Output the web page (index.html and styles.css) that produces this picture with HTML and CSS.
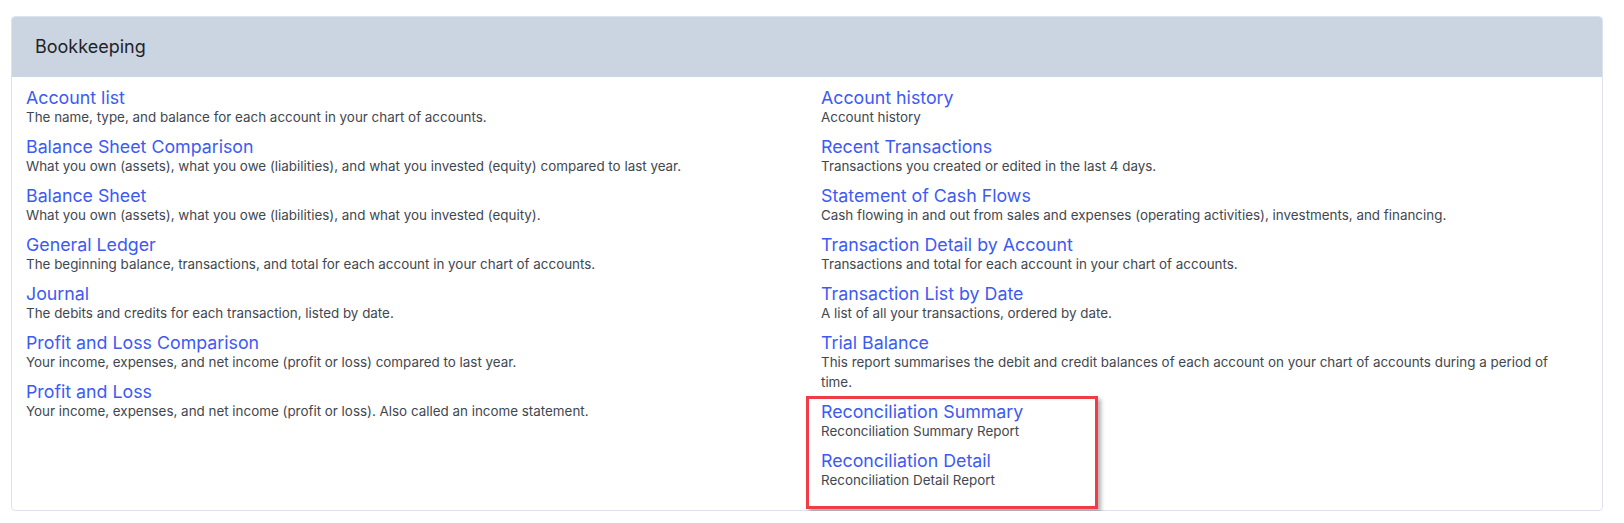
FILE: index.html
```html
<!DOCTYPE html>
<html lang="en">
<head>
    <meta charset="UTF-8">
    <meta name="viewport" content="width=device-width, initial-scale=1.0">
    <title>Reports - Bookkeeping</title>
    <link rel="stylesheet" href="styles.css">
</head>
<body>

<div class="report-card">
    <div class="report-card-header">Bookkeeping</div>

    <div class="report-card-body">
        <!-- Left column -->
        <div class="report-col">
            <div class="report-item">
                <a href="#" class="report-title">Account list</a>
                <p class="report-desc">The name, type, and balance for each account in your chart of accounts.</p>
            </div>
            <div class="report-item">
                <a href="#" class="report-title">Balance Sheet Comparison</a>
                <p class="report-desc">What you own (assets), what you owe (liabilities), and what you invested (equity) compared to last year.</p>
            </div>
            <div class="report-item">
                <a href="#" class="report-title">Balance Sheet</a>
                <p class="report-desc">What you own (assets), what you owe (liabilities), and what you invested (equity).</p>
            </div>
            <div class="report-item">
                <a href="#" class="report-title">General Ledger</a>
                <p class="report-desc">The beginning balance, transactions, and total for each account in your chart of accounts.</p>
            </div>
            <div class="report-item">
                <a href="#" class="report-title">Journal</a>
                <p class="report-desc">The debits and credits for each transaction, listed by date.</p>
            </div>
            <div class="report-item">
                <a href="#" class="report-title">Profit and Loss Comparison</a>
                <p class="report-desc">Your income, expenses, and net income (profit or loss) compared to last year.</p>
            </div>
            <div class="report-item">
                <a href="#" class="report-title">Profit and Loss</a>
                <p class="report-desc">Your income, expenses, and net income (profit or loss). Also called an income statement.</p>
            </div>
        </div>

        <!-- Right column -->
        <div class="report-col">
            <div class="report-item">
                <a href="#" class="report-title">Account history</a>
                <p class="report-desc">Account history</p>
            </div>
            <div class="report-item">
                <a href="#" class="report-title">Recent Transactions</a>
                <p class="report-desc">Transactions you created or edited in the last 4 days.</p>
            </div>
            <div class="report-item">
                <a href="#" class="report-title">Statement of Cash Flows</a>
                <p class="report-desc">Cash flowing in and out from sales and expenses (operating activities), investments, and financing.</p>
            </div>
            <div class="report-item">
                <a href="#" class="report-title">Transaction Detail by Account</a>
                <p class="report-desc">Transactions and total for each account in your chart of accounts.</p>
            </div>
            <div class="report-item">
                <a href="#" class="report-title">Transaction List by Date</a>
                <p class="report-desc">A list of all your transactions, ordered by date.</p>
            </div>
            <div class="report-item">
                <a href="#" class="report-title">Trial Balance</a>
                <p class="report-desc">This report summarises the debit and credit balances of each account on your chart of accounts during a period of time.</p>
            </div>
            <div class="report-item">
                <a href="#" class="report-title">Reconciliation Summary</a>
                <p class="report-desc">Reconciliation Summary Report</p>
            </div>
            <div class="report-item">
                <a href="#" class="report-title">Reconciliation Detail</a>
                <p class="report-desc">Reconciliation Detail Report</p>
            </div>
        </div>
    </div>

    <!-- annotation box over the new reports -->
    <div class="highlight-box"></div>
</div>

</body>
</html>
```

FILE: styles.css
```css
body {
    margin: 0;
    font-family: Inter, "Noto Sans", Arial, sans-serif;
    background: #fff;
}
.report-card {
    position: relative;
    margin: 16px 21px 0 11px;
    border: 1px solid #dde3ec;
    border-radius: 4px;
    background: #fff;
}
.report-card-header {
    height: 60px;
    line-height: 60px;
    padding-left: 23px;
    background-color: #cbd5e1;
    color: #1f2329;
    font-size: 18px;
    border-radius: 3px 3px 0 0;
}
.report-card-body {
    display: grid;
    grid-template-columns: 1fr 1fr;
    padding: 12px 0 9px 0;
}
.report-col {
    padding: 0 26px 0 14px;
}
.report-item {
    margin-bottom: 11px;
}
.report-title {
    display: block;
    font-size: 17.8px;
    line-height: 18px;
    color: #3d5af5;
    text-decoration: none;
}
.report-desc {
    margin: 0;
    font-size: 13.4px;
    line-height: 20px;
    color: #41474f;
}
.highlight-box {
    position: absolute;
    left: 794px;
    top: 379px;
    width: 286px;
    height: 107px;
    border: 3px solid #f03c44;
    box-shadow: 3px 3px 4px rgba(0, 0, 0, 0.3);
}
```
